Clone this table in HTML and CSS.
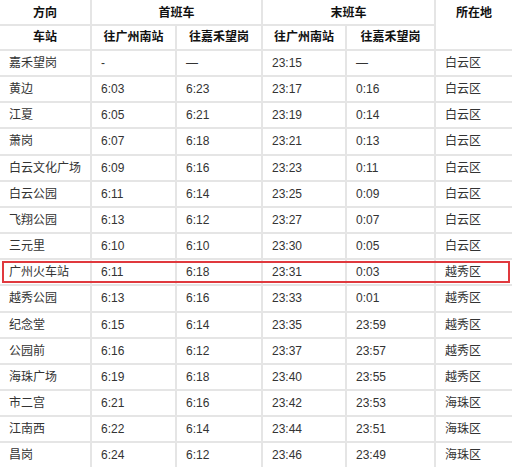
FILE: index.html
```html
<!DOCTYPE html>
<html lang="zh-CN">
<head>
<meta charset="utf-8">
<title>时刻表</title>
<link rel="stylesheet" href="styles.css">
</head>
<body>
<table class="timetable">
  <colgroup>
    <col class="c1"><col class="c2"><col class="c3"><col class="c4"><col class="c5"><col class="c6">
  </colgroup>
  <thead>
    <tr class="h1">
      <th>方向</th>
      <th colspan="2">首班车</th>
      <th colspan="2">末班车</th>
      <th rowspan="2" class="top">所在地</th>
    </tr>
    <tr class="h2">
      <th>车站</th>
      <th>往广州南站</th>
      <th>往嘉禾望岗</th>
      <th>往广州南站</th>
      <th>往嘉禾望岗</th>
    </tr>
  </thead>
  <tbody>
    <tr><td>嘉禾望岗</td><td>-</td><td>—</td><td>23:15</td><td>—</td><td>白云区</td></tr>
    <tr><td>黄边</td><td>6:03</td><td>6:23</td><td>23:17</td><td>0:16</td><td>白云区</td></tr>
    <tr><td>江夏</td><td>6:05</td><td>6:21</td><td>23:19</td><td>0:14</td><td>白云区</td></tr>
    <tr><td>萧岗</td><td>6:07</td><td>6:18</td><td>23:21</td><td>0:13</td><td>白云区</td></tr>
    <tr><td>白云文化广场</td><td>6:09</td><td>6:16</td><td>23:23</td><td>0:11</td><td>白云区</td></tr>
    <tr><td>白云公园</td><td>6:11</td><td>6:14</td><td>23:25</td><td>0:09</td><td>白云区</td></tr>
    <tr><td>飞翔公园</td><td>6:13</td><td>6:12</td><td>23:27</td><td>0:07</td><td>白云区</td></tr>
    <tr><td>三元里</td><td>6:10</td><td>6:10</td><td>23:30</td><td>0:05</td><td>白云区</td></tr>
    <tr class="highlight"><td>广州火车站</td><td>6:11</td><td>6:18</td><td>23:31</td><td>0:03</td><td>越秀区</td></tr>
    <tr><td>越秀公园</td><td>6:13</td><td>6:16</td><td>23:33</td><td>0:01</td><td>越秀区</td></tr>
    <tr><td>纪念堂</td><td>6:15</td><td>6:14</td><td>23:35</td><td>23:59</td><td>越秀区</td></tr>
    <tr><td>公园前</td><td>6:16</td><td>6:12</td><td>23:37</td><td>23:57</td><td>越秀区</td></tr>
    <tr><td>海珠广场</td><td>6:19</td><td>6:18</td><td>23:40</td><td>23:55</td><td>越秀区</td></tr>
    <tr><td>市二宫</td><td>6:21</td><td>6:16</td><td>23:42</td><td>23:53</td><td>海珠区</td></tr>
    <tr><td>江南西</td><td>6:22</td><td>6:14</td><td>23:44</td><td>23:51</td><td>海珠区</td></tr>
    <tr><td>昌岗</td><td>6:24</td><td>6:12</td><td>23:46</td><td>23:49</td><td>海珠区</td></tr>
  </tbody>
</table>
</body>
</html>
```
FILE: styles.css
```css
html, body {
  margin: 0;
  padding: 0;
  background: #ffffff;
}

.timetable {
  width: 512px;
  table-layout: fixed;
  border-collapse: collapse;
  border-style: hidden;
  font-family: "Liberation Sans", "Noto Sans CJK SC", sans-serif;
  font-size: 12px;
  color: #333333;
}

.c1 { width: 91px; }
.c2 { width: 85px; }
.c3 { width: 86px; }
.c4 { width: 84px; }
.c5 { width: 89px; }
.c6 { width: 77px; }

.timetable th,
.timetable td {
  border: 2px solid #e5e5e5;
  line-height: 18px;
  white-space: nowrap;
  overflow: hidden;
}

.timetable th {
  font-weight: bold;
  color: #111111;
  text-align: center;
  padding: 2px 4px;
}

.timetable .h1 th {
  padding: 4px 4px 2px;
}

.timetable .h2 th {
  padding: 2px 4px 3px;
}

.timetable th.top {
  vertical-align: top;
}

.timetable td {
  text-align: left;
  line-height: 18.15px;
  padding: 3px 9px;
}

.timetable tr.highlight {
  outline: 2px solid #e0393e;
  outline-offset: -4px;
}
```
